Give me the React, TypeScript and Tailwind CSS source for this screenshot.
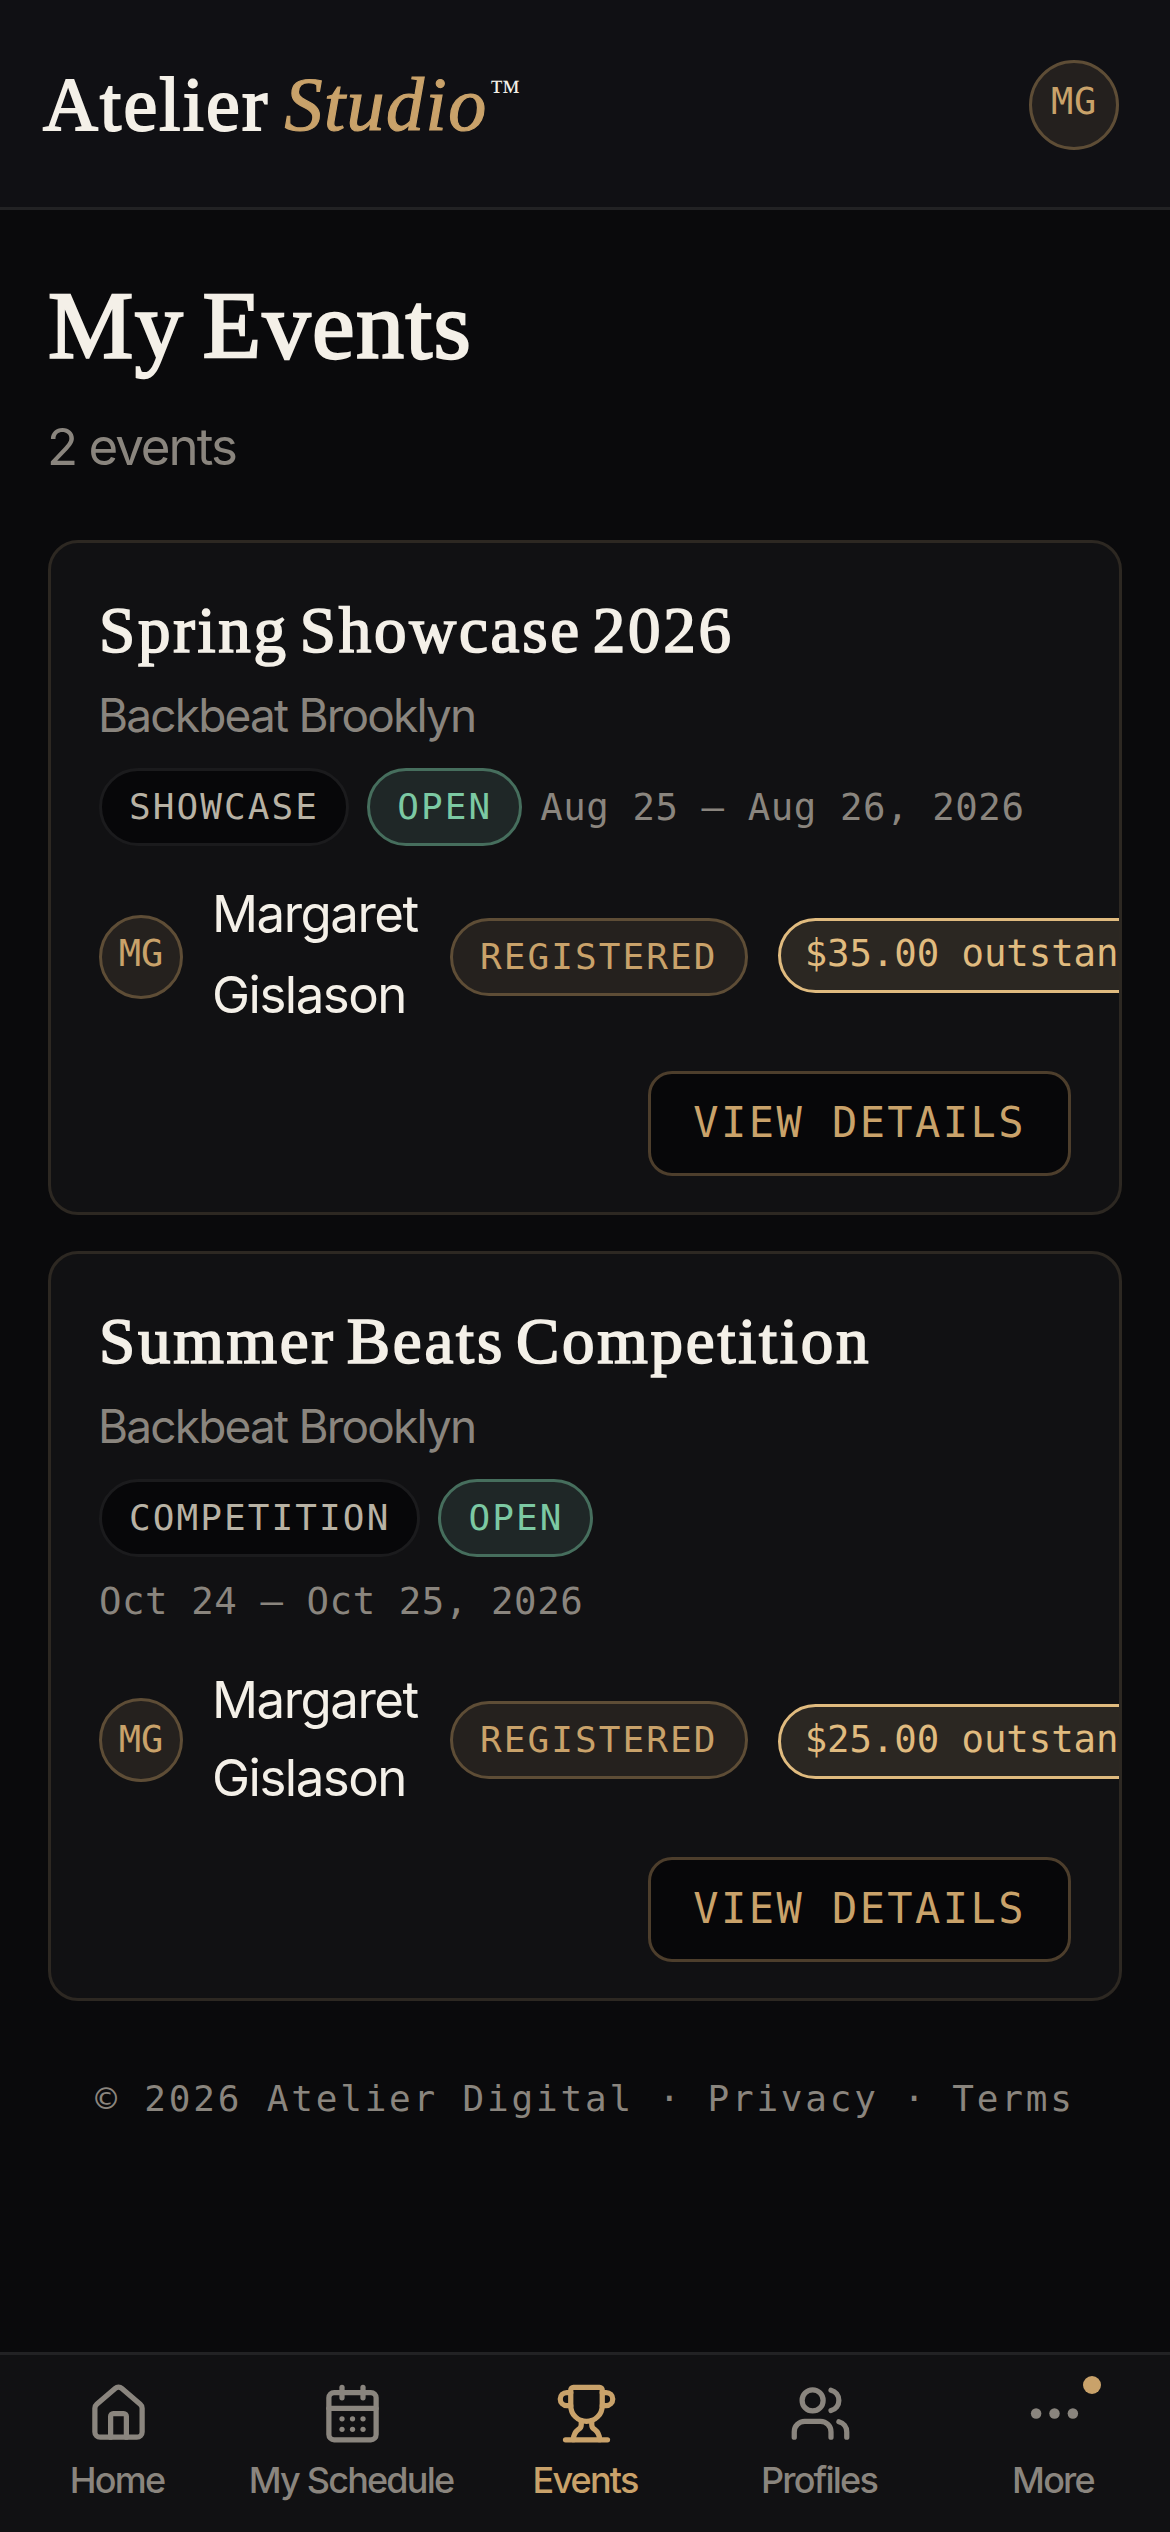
import { CalendarDays, House, Trophy, Users } from 'lucide-react';
import type { ReactNode } from 'react';

interface StudioEvent {
  title: string;
  venue: string;
  kind: string;
  dates: string;
  balance: string;
  rowClass: string;
  nameClass: string;
  initialsClass: string;
  balanceClass: string;
}

const events: StudioEvent[] = [
  {
    title: 'Spring Showcase 2026',
    venue: 'Backbeat Brooklyn',
    kind: 'SHOWCASE',
    dates: 'Aug 25 – Aug 26, 2026',
    balance: '$35.00 outstanding',
    rowClass: 'mt-[30px] mb-[33px] h-[162px]',
    nameClass: 'leading-[81px] pb-1.5',
    initialsClass: 'pb-[7px]',
    balanceClass: 'mb-[3px]',
  },
  {
    title: 'Summer Beats Competition',
    venue: 'Backbeat Brooklyn',
    kind: 'COMPETITION',
    dates: 'Oct 24 – Oct 25, 2026',
    balance: '$25.00 outstanding',
    rowClass: 'mt-[35px] mb-[39px] h-[156px]',
    nameClass: 'leading-[78px] pb-0.5',
    initialsClass: 'pb-[1px]',
    balanceClass: 'mt-[3px]',
  },
];

const serif = 'font-["Liberation_Serif",serif]';
const mono = 'font-["DejaVu_Sans_Mono",monospace]';

function Tag({ children, tone }: { children: ReactNode; tone: string }) {
  return (
    <span
      className={`${mono} flex h-[78px] shrink-0 items-center rounded-full border-[3px] pr-[27px] pb-px pl-[27px] text-[36px] leading-none tracking-[2.09px] whitespace-nowrap ${tone}`}
    >
      {children}
    </span>
  );
}

function EventCard({ event }: { event: StudioEvent }) {
  return (
    <article className="overflow-hidden rounded-[30px] border-[3px] border-[#2d2822] bg-[#111113] px-12 pt-[51px] pb-9">
      <h2
        className={`${serif} text-[65px] leading-[72px] tracking-[2.75px] whitespace-nowrap text-[#f4f0e8] [-webkit-text-stroke:1.7px_#f4f0e8] [word-spacing:-8px]`}
      >
        {event.title}
      </h2>
      <p className="mt-[13px] -ml-px text-[46px] leading-[72px] tracking-[-1.81px] text-[#8a857e]">{event.venue}</p>
      <div className="mt-[17px] flex flex-wrap items-center gap-[18px]">
        <Tag tone="border-[#1b1b1d] bg-[#070709] text-[#b8b2a4]">{event.kind}</Tag>
        <Tag tone="border-[#466e5d] bg-[#1f2727] text-[#7cc9a3]">OPEN</Tag>
        <span className={`${mono} text-[37.4px] leading-[52px] tracking-[0.55px] whitespace-nowrap text-[#8a857e]`}>
          {event.dates}
        </span>
      </div>
      <div className={`flex items-center gap-[30px] ${event.rowClass}`}>
        <span
          className={`${mono} flex size-[84px] shrink-0 items-center justify-center rounded-full border-[3px] border-[#5e4d36] bg-[#25211e] text-[37px] leading-none text-[#c9a26a] ${event.initialsClass}`}
        >
          MG
        </span>
        <span className={`-ml-px w-[208px] shrink-0 text-[51px] tracking-[-1.5px] text-[#f4f0e8] ${event.nameClass}`}>
          Margaret Gislason
        </span>
        <Tag tone="border-[#5e4d36] bg-[#25211e] text-[#c9a26a]">REGISTERED</Tag>
        <span
          className={`${mono} flex h-[75px] shrink-0 items-center rounded-full border-[3px] border-[#e0bb7f] bg-[#2b2722] px-6 pb-1 text-[37.4px] leading-none tracking-[-0.1px] whitespace-nowrap text-[#e0bb7f] ${event.balanceClass}`}
        >
          {event.balance}
        </span>
      </div>
      <div className="flex justify-end">
        <button
          className={`${mono} flex h-[105px] items-center rounded-3xl border-[3px] border-[#4d3e2c] bg-[#070709] px-[42px] pb-0.5 text-[42px] leading-none tracking-[2.44px] text-[#c9a26a]`}
        >
          VIEW DETAILS
        </button>
      </div>
    </article>
  );
}

function NavItem({
  label,
  icon,
  active = false,
  badge = false,
}: {
  label: string;
  icon: ReactNode;
  active?: boolean;
  badge?: boolean;
}) {
  return (
    <a className={`flex flex-col items-center pt-[27px] ${active ? 'text-[#c9a26a]' : 'text-[#8a857e]'}`}>
      <span className="relative ml-[3px] size-[63px]">
        {icon}
        {badge && <span className="absolute -top-1.5 left-[60px] size-[18px] rounded-full bg-[#c9a26a]" />}
      </span>
      <span className="mt-[13px] text-[36px] leading-[45px] font-medium tracking-[-1.8px] whitespace-nowrap">
        {label}
      </span>
    </a>
  );
}

export default function App() {
  return (
    <div className='flex h-[2532px] w-[1170px] flex-col overflow-hidden bg-[#0a0a0c] font-["Inter",sans-serif]'>
      <header className="flex h-[210px] shrink-0 items-center justify-between border-b-[3px] border-[#222224] bg-[#101014] pt-[3px] pr-[51px] pl-[43px]">
        <div
          className={`${serif} -mt-[3px] text-[76px] leading-[90px] whitespace-nowrap text-[#f4f0e8] [-webkit-text-stroke:2px]`}
        >
          <span className="tracking-[2.2px]">Atelier</span>
          <em className="ml-[15px] tracking-[1.5px] text-[#c9a26a] [-webkit-text-stroke:1.2px]">Studio</em>
          <span className="ml-0.5 align-[29px] text-[31px] leading-none [-webkit-text-stroke:0px]">™</span>
        </div>
        <span
          className={`${mono} flex size-[90px] items-center justify-center rounded-full border-[3px] border-[#5e4d36] bg-[#24201e] pb-[7px] text-[37px] leading-none tracking-[0.8px] text-[#c9a26a]`}
        >
          MG
        </span>
      </header>

      <main className="flex-1 px-12 pt-[66px]">
        <h1
          className={`${serif} text-[96px] leading-[99px] tracking-[1.4px] text-[#f4f0e8] [-webkit-text-stroke:2.3px] [word-spacing:-7px]`}
        >
          My Events
        </h1>
        <p className="mt-8 -ml-px text-[51px] leading-[79px] tracking-[-2px] text-[#8a857e]">2 events</p>
        <div className="mt-[54px] flex flex-col gap-9">
          {events.map((event) => (
            <EventCard key={event.title} event={event} />
          ))}
        </div>
        <footer
          className={`${mono} mt-[70px] text-center text-[36px] leading-[56px] tracking-[2.81px] whitespace-nowrap text-[#8a857e]`}
        >
          © 2026 Atelier Digital · Privacy · Terms
        </footer>
      </main>

      <nav className="grid h-[180px] shrink-0 grid-cols-5 border-t-[3px] border-[#222224] bg-[#111113]">
        <NavItem label="Home" icon={<House size={63} />} />
        <NavItem label="My Schedule" icon={<CalendarDays size={63} />} />
        <NavItem label="Events" icon={<Trophy size={63} />} active />
        <NavItem label="Profiles" icon={<Users size={63} />} />
        <NavItem
          label="More"
          badge
          icon={
            <svg width="63" height="63" viewBox="0 0 24 24" fill="currentColor">
              <circle cx="5" cy="12" r="2" />
              <circle cx="12" cy="12" r="2" />
              <circle cx="19" cy="12" r="2" />
            </svg>
          }
        />
      </nav>
    </div>
  );
}
